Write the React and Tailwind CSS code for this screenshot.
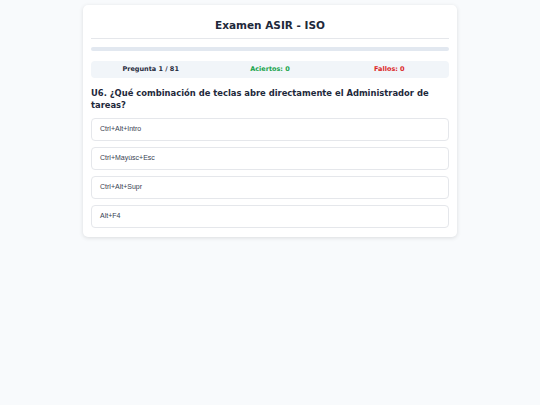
const options = ["Ctrl+Alt+Intro", "Ctrl+Mayúsc+Esc", "Ctrl+Alt+Supr", "Alt+F4"];

export default function App() {
  return (
    <div className="min-h-screen bg-[#f8fafc] pt-[5px] font-['DejaVu_Sans',sans-serif]">
      <div className="mx-auto w-[374px] rounded-[5px] bg-white px-2 pt-[13px] pb-[9px] shadow-[0_1px_4px_rgba(0,0,0,0.12)]">
        <h1 className="border-b border-[#e5e7eb] pb-[6px] text-center text-[10.5px] leading-[14px] font-bold text-[#1e293b]">
          Examen ASIR - ISO
        </h1>

        <div className="mt-[8px] h-[4px] w-full rounded-full bg-[#e2e8f0]" />

        <div className="mt-[10px] grid h-[17px] grid-cols-3 items-center rounded-[4px] bg-[#f1f5f9] text-center text-[6.5px] font-bold">
          <span className="text-[#1e293b]">Pregunta 1 / 81</span>
          <span className="text-[#16a34a]">Aciertos: 0</span>
          <span className="text-[#dc2626]">Fallos: 0</span>
        </div>

        <h2 className="mt-[9px] text-[8.4px] leading-[12px] font-bold text-[#1e293b]">
          U6. ¿Qué combinación de teclas abre directamente el Administrador de tareas?
        </h2>

        <div className="mt-[7px] flex flex-col gap-[6px]">
          {options.map((opt) => (
            <button
              key={opt}
              className="flex h-[23px] w-full items-center rounded-[4px] border border-[#e5e7eb] bg-white px-[8px] text-left font-['Liberation_Sans',sans-serif] text-[7px] text-[#374151]"
            >
              {opt}
            </button>
          ))}
        </div>
      </div>
    </div>
  );
}
